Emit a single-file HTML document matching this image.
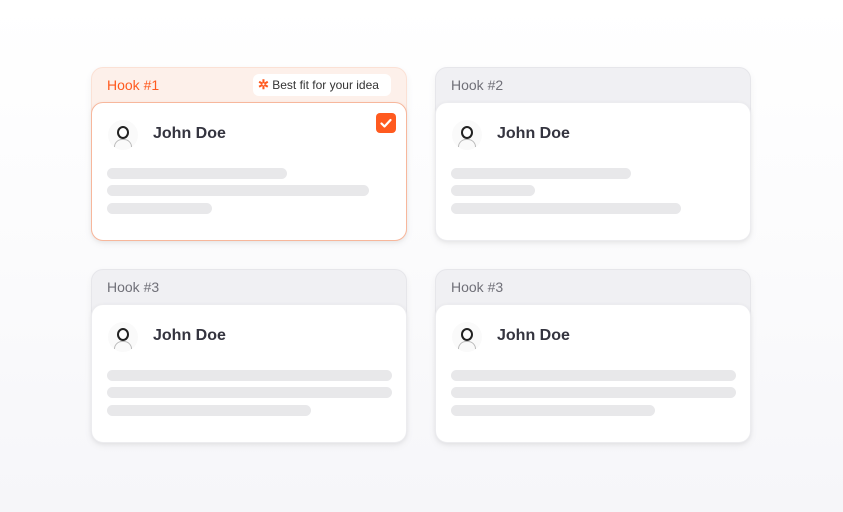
<!DOCTYPE html>
<html><head><meta charset="utf-8"><style>
*{margin:0;padding:0;box-sizing:border-box}
body{width:843px;height:512px;overflow:hidden;background:linear-gradient(#fff 0%,#fcfcfd 40%,#f6f6f9 100%);font-family:"Liberation Sans",sans-serif;position:relative}
.card{position:absolute;width:316px;height:174px;border-radius:12px;background:#f0f0f3;border:1px solid #e6e6ea;box-shadow:0 3px 8px rgba(0,0,0,0.05)}
.card .h{position:absolute;left:15px;top:9px;font-size:14px;color:#707078}
.in{position:absolute;left:-1px;right:-1px;top:34px;bottom:-1px;background:#fff;border-radius:12px;border:1px solid #ececef;box-shadow:0 1px 4px rgba(0,0,0,0.06)}
.av{position:absolute;left:16px;top:17px;width:30px;height:30px;border-radius:50%;background:#fafafa}
.av .hd{position:absolute;left:9px;top:6px;width:12px;height:13px;border-radius:50%;border:2.5px solid #222;background:#fff}
.av .bd{position:absolute;left:6px;top:19px;width:18px;height:8px;border-radius:9px 9px 0 0;border:1px solid #bbb;border-bottom:none}
.nm{position:absolute;left:61px;top:22px;font-size:16px;font-weight:bold;color:#34343f}
.bar{position:absolute;left:15px;height:11px;border-radius:6px;background:#e8e8ea}
.sel{background:#fdf0ea;border-color:#fbe1d5}
.sel .h{color:#ff5a1f}
.sel .in{border:1.5px solid #f7b79c}
.badge{position:absolute;left:161px;top:6px;width:138px;height:22px;background:#fff;border-radius:6px;font-size:12px;color:#333;line-height:22px;padding-left:5px}
.badge b{color:#ff5a1f;font-size:13px}
.chk{position:absolute;right:10px;top:10px;width:20px;height:20px;border-radius:4px;background:#ff5a1f}
</style></head><body>
<div class="card sel" style="left:91px;top:67px"><div class="h">Hook #1</div>
<div class="badge"><b>✲</b> Best fit for your idea</div>
<div class="in"><div class="av"><div class="bd"></div><div class="hd"></div></div><div class="nm">John Doe</div>
<div class="chk"><svg width="20" height="20"><path d="M5.5 10.5l3 3 6-6.5" stroke="#fff" stroke-width="2.2" fill="none" stroke-linecap="round" stroke-linejoin="round"/></svg></div>
<div class="bar" style="top:65px;width:180px"></div><div class="bar" style="top:82px;width:262px"></div><div class="bar" style="top:100px;width:105px"></div></div></div>

<div class="card" style="left:435px;top:67px"><div class="h">Hook #2</div>
<div class="in"><div class="av"><div class="bd"></div><div class="hd"></div></div><div class="nm">John Doe</div>
<div class="bar" style="top:65px;width:180px"></div><div class="bar" style="top:82px;width:84px"></div><div class="bar" style="top:100px;width:230px"></div></div></div>

<div class="card" style="left:91px;top:269px"><div class="h">Hook #3</div>
<div class="in"><div class="av"><div class="bd"></div><div class="hd"></div></div><div class="nm">John Doe</div>
<div class="bar" style="top:65px;width:285px"></div><div class="bar" style="top:82px;width:285px"></div><div class="bar" style="top:100px;width:204px"></div></div></div>

<div class="card" style="left:435px;top:269px"><div class="h">Hook #3</div>
<div class="in"><div class="av"><div class="bd"></div><div class="hd"></div></div><div class="nm">John Doe</div>
<div class="bar" style="top:65px;width:285px"></div><div class="bar" style="top:82px;width:285px"></div><div class="bar" style="top:100px;width:204px"></div></div></div>
</body></html>
